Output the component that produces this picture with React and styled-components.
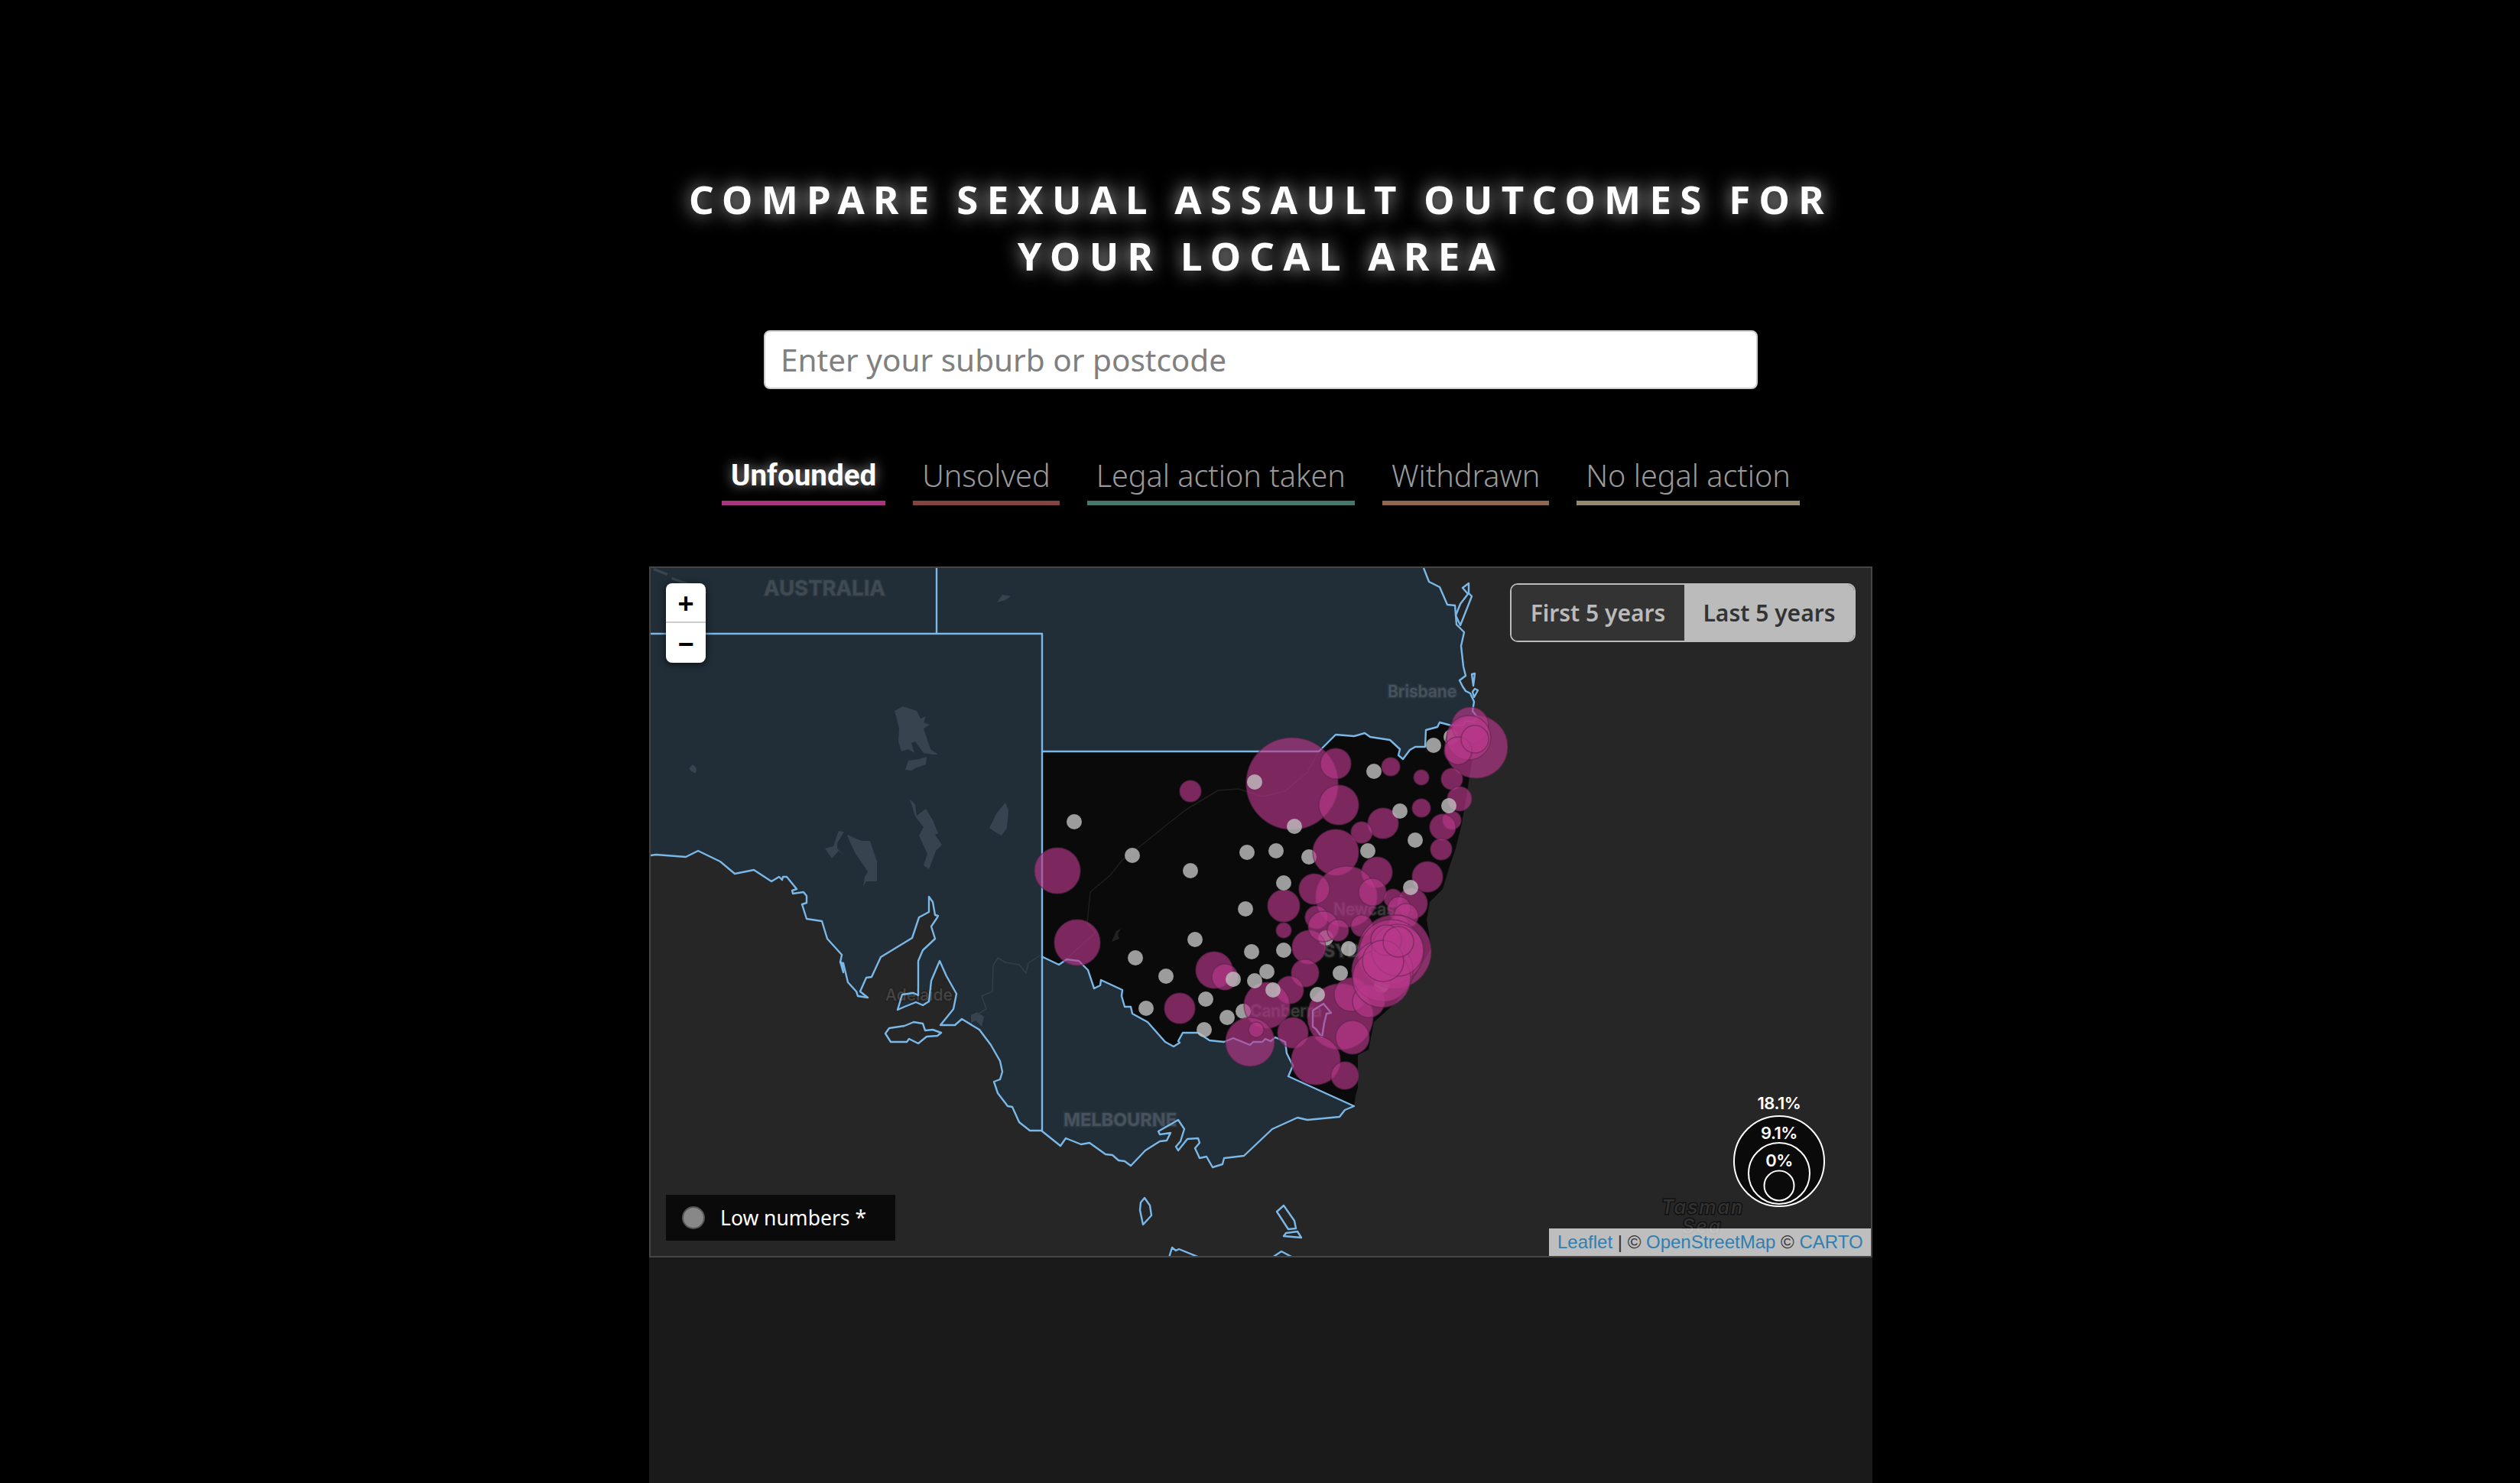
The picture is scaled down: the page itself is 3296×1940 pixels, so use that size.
import React from 'react';
import styled, { createGlobalStyle } from 'styled-components';

const GlobalStyle = createGlobalStyle`
  html, body { margin: 0; padding: 0; background: #000; }
  body { font-family: "Noto Sans", "Open Sans", sans-serif; overflow: hidden; }
`;

const Page = styled.div`
  width: 3296px;
  height: 1940px;
  padding-top: 223px;
  padding-left: 2px;
  box-sizing: border-box;
  display: flex;
  flex-direction: column;
  align-items: center;
  overflow: hidden;
`;

const Title = styled.h1`
  margin: 0;
  width: 1600px;
  font-size: 51px;
  line-height: 74px;
  font-weight: 700;
  letter-spacing: 11.3px;
  text-align: center;
  text-transform: uppercase;
  color: #fff;
  text-shadow: 0 0 24px rgba(255, 255, 255, 0.8);
`;

const Search = styled.input`
  display: block;
  box-sizing: border-box;
  width: 1300px;
  height: 77px;
  margin-top: 61px;
  padding: 0 20px;
  border: 2px solid #ccc;
  border-radius: 8px;
  background: #fff;
  font-family: inherit;
  font-size: 40.5px;
  color: #222;
  &::placeholder { color: #808080; opacity: 1; }
`;

const Tabs = styled.div`
  display: flex;
  gap: 36px;
  margin-top: 86px;
  margin-bottom: 80px;
`;

const Tab = styled.div`
  padding: 0 12px 6px;
  border-bottom: 6px solid ${(p) => p.$color};
  font-family: ${(p) => (p.$active ? 'Roboto, sans-serif' : 'inherit')};
  font-size: ${(p) => (p.$active ? 38.6 : 39.6)}px;
  line-height: 54px;
  font-weight: ${(p) => (p.$active ? 700 : 300)};
  color: ${(p) => (p.$active ? '#fff' : '#9a9a9a')};
  text-shadow: ${(p) => (p.$active ? '0 0 16px rgba(255,255,255,.6)' : 'none')};
`;

const MapFrame = styled.div`
  position: relative;
  flex: none;
  box-sizing: border-box;
  width: 1600px;
  height: 904px;
  border: 2px solid #444;
  background: #262626;
  overflow: hidden;
`;

const MapSvg = styled.svg`
  display: block;
  width: 1596px;
  height: 900px;
`;

const ZoomControl = styled.div`
  position: absolute;
  left: 20px;
  top: 20px;
  width: 52px;
  border-radius: 8px;
  background: #fff;
  box-shadow: 0 2px 10px rgba(0, 0, 0, 0.65);
  overflow: hidden;
`;

const ZoomButton = styled.div`
  height: 52px;
  padding-top: 4px;
  display: flex;
  align-items: center;
  justify-content: center;
  box-sizing: border-box;
  border-bottom: ${(p) => (p.$first ? '2px solid #ccc' : 'none')};
  font-family: "Liberation Sans", sans-serif;
  font-size: 36px;
  font-weight: 700;
  color: #000;
`;

const PeriodToggle = styled.div`
  position: absolute;
  right: 20px;
  top: 20px;
  display: flex;
  box-sizing: border-box;
  height: 77px;
  border: 2px solid #bbb;
  border-radius: 10px;
  overflow: hidden;
`;

const PeriodButton = styled.div`
  display: flex;
  align-items: center;
  justify-content: center;
  width: ${(p) => p.$width}px;
  background: ${(p) => (p.$on ? '#bbb' : '#333')};
  color: ${(p) => (p.$on ? '#333' : '#bbb')};
  font-size: 30px;
  font-weight: 600;
`;

const LowKey = styled.div`
  position: absolute;
  left: 20px;
  bottom: 20px;
  display: flex;
  align-items: center;
  gap: 20px;
  box-sizing: border-box;
  width: 300px;
  height: 60px;
  padding-left: 21px;
  background: #0a0a0a;
  color: #fff;
  font-size: 26.5px;
`;

const LowDot = styled.span`
  flex: none;
  box-sizing: border-box;
  width: 30px;
  height: 30px;
  border-radius: 50%;
  border: 2px solid #555;
  background: #888;
`;

const Attribution = styled.div`
  position: absolute;
  right: 0;
  bottom: 0;
  box-sizing: border-box;
  width: 421px;
  height: 36px;
  padding-left: 11px;
  background: rgba(255, 255, 255, 0.7);
  font-family: "Liberation Sans", Arial, sans-serif;
  font-size: 24px;
  line-height: 36px;
  color: #333;
  white-space: nowrap;
`;

const AttrLink = styled.span`
  color: #2f7fb2;
`;

const LowerPanel = styled.div`
  flex: 1;
  width: 1600px;
  background: #1a1a1a;
`;

const Land = styled.path`
  fill: ${(p) => p.$fill};
  stroke: none;
`;

const Line = styled.path`
  fill: ${(p) => p.$fill || 'none'};
  stroke: ${(p) => p.$stroke || '#7ab8e8'};
  stroke-width: ${(p) => p.$width || 2.4}px;
  stroke-linejoin: round;
`;

const Bubble = styled.circle`
  fill: #b8388a;
  fill-opacity: 0.66;
  stroke: #5a2548;
  stroke-opacity: 0.55;
  stroke-width: 1.5px;
`;

const GreyBubble = styled.circle`
  fill: #c0c0c0;
  fill-opacity: 0.8;
`;

const KeyRing = styled.circle`
  fill: #0a0a0a;
  stroke: #fff;
  stroke-width: 2px;
`;

const MapLabel = styled.text`
  font-family: Inter, "Noto Sans", sans-serif;
  font-size: ${(p) => p.$size}px;
  font-weight: ${(p) => p.$weight || 600};
  font-style: ${(p) => (p.$italic ? 'italic' : 'normal')};
  letter-spacing: ${(p) => (p.$italic ? 2 : 0)}px;
  fill: ${(p) => p.$fill};
  stroke: ${(p) => p.$halo};
  stroke-width: 3px;
  paint-order: stroke;
`;

const KeyLabel = styled.text`
  font-family: Inter, "Noto Sans", sans-serif;
  font-size: 22px;
  font-weight: 600;
  letter-spacing: -0.5px;
  fill: #fff;
  text-anchor: middle;
`;

const d = (...parts) => 'M' + parts.join(' ').trim().split(/\s+/).join(' L');

const qldCoast = '1862,743 1869,761 1883,768 1893,791 1903,792 1905,817 1915,827 1911,845 1914,872 1917,884 1909,890 1913,898 1917,904 1923,907 1928,918 1926,930 1933,939';
const qldBorder = '1925,945 1917,943 1914,949 1898,949 1883,945 1880,951 1865,955 1864,977 1851,977 1844,981 1835,993 1829,988 1831,980 1818,968 1792,964 1785,959 1771,963 1747,961 1725,983 1363,983';
const vicNorth = '1362,1251 1385,1262 1395,1255 1411,1257 1423,1269 1431,1293 1439,1289 1440,1282 1468,1295 1467,1303 1471,1317 1479,1317 1481,1326 1501,1337 1524,1363 1535,1369 1543,1364 1541,1362 1547,1351 1567,1351 1582,1361 1601,1363 1613,1358 1635,1367 1639,1363 1651,1363 1655,1359 1662,1362 1668,1357 1681,1363 1683,1378 1691,1394 1685,1408 1771,1447';
const nswCoast = '1773,1433 1776,1423 1776,1380 1790,1373 1797,1337 1824,1313 1845,1287 1872,1240 1866,1203 1870,1180 1887,1163 1896,1133 1904,1110 1912,1077 1921,1023 1925,997 1928,960';
const vicCoast = '1759,1452 1752,1461 1710,1465 1697,1462 1664,1477 1627,1512 1601,1515 1599,1523 1586,1527 1578,1513 1569,1515 1563,1502 1569,1495 1567,1489 1553,1490 1541,1505 1538,1500 1544,1493 1549,1477 1541,1465 1515,1480 1517,1484 1531,1482 1526,1492 1517,1493 1498,1505 1479,1525 1471,1519 1463,1518 1455,1511 1446,1510 1425,1495 1414,1497 1394,1489 1387,1499 1362,1479';
const saCoast = '1347,1479 1333,1468 1324,1448 1318,1447 1305,1430 1300,1415 1308,1412 1311,1402 1308,1388 1296,1367 1281,1347 1258,1333 1249,1341 1230,1341 1247,1320 1251,1300 1238,1277 1229,1257 1218,1283 1215,1310 1207,1315 1198,1311 1183,1317 1174,1321 1180,1301 1195,1299 1201,1302 1201,1257 1207,1243 1223,1228 1218,1212 1226,1200 1227,1198 1223,1197 1220,1180 1215,1173 1215,1193 1202,1200 1193,1227 1152,1252 1140,1278 1133,1279 1125,1297 1135,1305 1122,1303 1120,1297 1109,1285 1103,1260 1099,1259 1101,1249 1082,1228 1075,1205 1055,1202 1049,1183 1055,1181 1055,1172 1051,1167 1037,1169 1036,1165 1042,1163 1029,1147 1024,1147 1023,1151 1019,1147 1009,1153 986,1138 961,1143 942,1127 913,1113 897,1121 858,1118 851,1119';

const landPath = d('851,743', qldCoast, qldBorder, vicNorth, vicCoast, saCoast) + ' Z';
const nswPath = d(qldBorder, vicNorth, nswCoast) + ' Z';
const coastLine = d(qldCoast, qldBorder);
const southLine = d(vicNorth, vicCoast, saCoast);

const islands = [
  '1158,1352 1163,1345 1183,1342 1195,1337 1207,1339 1210,1348 1220,1347 1231,1351 1226,1355 1212,1356 1201,1365 1189,1359 1186,1363 1165,1363',
  '1497,1567 1504,1577 1506,1590 1495,1602 1491,1583 1492,1573',
  '1679,1577 1670,1585 1685,1608 1695,1607 1693,1597',
  '1682,1613 1697,1611 1702,1619 1679,1617',
  '1529,1645 1533,1632 1538,1636 1542,1634 1569,1645',
  '1664,1645 1676,1637 1691,1645',
  '1921,763 1913,769 1920,777 1910,790 1904,805 1910,818 1925,780 1921,776',
  '1925,882 1929,881 1927,897',
  '1929,901 1933,903 1928,912 1926,905',
  '1102,1262 1099,1258 1103,1272',
  '1717,1322 1731,1313 1741,1325 1735,1326 1732,1338 1729,1357 1721,1346 1717,1343',
];

const lakes = [
  '1170,930 1181,924 1199,930 1204,940 1211,937 1208,945 1216,948 1208,953 1217,980 1227,987 1219,987 1208,985 1197,970 1192,972 1196,985 1188,980 1179,983 1175,970 1176,953 1172,937',
  '1212,990 1211,1000 1197,1005 1192,1008 1184,1007 1188,995 1202,993',
  '901,1005 906,1000 911,1005 910,1012 904,1009',
  '1189,1045 1197,1052 1199,1067 1211,1058 1220,1073 1227,1090 1223,1092 1232,1105 1224,1113 1215,1137 1208,1132 1213,1117 1202,1093 1208,1082 1197,1068 1192,1052',
  '1315,1050 1319,1060 1317,1083 1310,1093 1304,1090 1294,1083 1304,1063',
  '1108,1092 1127,1100 1138,1100 1147,1127 1147,1153 1133,1153 1129,1160 1131,1147 1135,1140 1119,1117 1111,1100',
  '1097,1087 1104,1088 1095,1103 1095,1110 1106,1120 1097,1113 1088,1123 1079,1110 1090,1107 1094,1095',
  '856,743 874,750 872,753 854,746',
  '879,755 902,763 925,775 922,777 900,766 878,758',
  '1304,788 1311,778 1322,780 1315,785',
  '1270,1328 1278,1324 1287,1330 1284,1343 1276,1335 1270,1338',
];

const rivers = [
  '1395,1255 1407,1243 1433,1220 1422,1207 1426,1167 1452,1145 1468,1125 1500,1100 1521,1083 1550,1060 1593,1034 1620,1032 1651,1042 1681,1035 1710,1010 1725,983',
];

const saRiver = '1360,1250 1345,1260 1342,1273 1333,1262 1315,1259 1305,1253 1299,1263 1298,1297 1284,1303 1290,1320 1278,1327';

const bubbles = [
  [1690, 1025, 60], [1747, 999, 20], [1751, 1053, 26], [1557, 1035, 14], [1383, 1139, 30], [1819, 1003, 12],
  [1859, 1017, 10], [1931, 977, 41], [1923, 949, 24], [1921, 965, 29], [1907, 982, 18], [1929, 967, 18],
  [1899, 1019, 14], [1909, 1045, 16], [1859, 1057, 12], [1899, 1073, 12], [1809, 1077, 20], [1887, 1082, 17],
  [1781, 1089, 14], [1885, 1111, 14], [1747, 1115, 30], [1801, 1141, 20], [1867, 1147, 20], [1761, 1173, 40],
  [1719, 1163, 20], [1795, 1167, 18], [1679, 1185, 21], [1679, 1217, 10], [1409, 1233, 30], [1588, 1269, 24],
  [1602, 1278, 17], [1712, 1239, 22], [1707, 1273, 18], [1687, 1295, 18], [1657, 1315, 30], [1543, 1319, 20],
  [1635, 1363, 32], [1643, 1347, 10], [1691, 1351, 20], [1753, 1330, 43], [1767, 1301, 22], [1790, 1310, 21],
  [1769, 1357, 22], [1721, 1387, 32], [1759, 1407, 18], [1722, 1200, 15], [1731, 1212, 20], [1750, 1217, 14],
  [1781, 1211, 14], [1822, 1175, 12], [1847, 1182, 20], [1830, 1188, 15], [1839, 1198, 16], [1830, 1210, 13],
  [1824, 1245, 48], [1820, 1245, 42], [1808, 1270, 40], [1807, 1280, 38], [1828, 1243, 34], [1813, 1230, 20],
  [1809, 1257, 27], [1829, 1232, 20],
];

// these sit underneath the pink circles in the picture
const greyUnder = [[1898, 964], [1712, 1121], [1734, 1227], [1764, 1241], [1807, 1289], [1626, 1323]];

const greyBubbles = [
  [1405, 1075], [1481, 1119], [1557, 1139], [1631, 1115], [1669, 1113], [1693, 1081], [1641, 1023],
  [1797, 1009], [1831, 1061], [1895, 1054], [1851, 1099], [1789, 1113], [1875, 975], [1679, 1155],
  [1629, 1189], [1845, 1161], [1563, 1229], [1485, 1253], [1525, 1277], [1637, 1245], [1679, 1243], [1657, 1271],
  [1641, 1283], [1613, 1281], [1577, 1307], [1499, 1319], [1605, 1331], [1575, 1347], [1665, 1295],
  [1723, 1301], [1753, 1273],
];

const tabs = [
  { label: 'Unfounded', color: '#a8347f', active: true },
  { label: 'Unsolved', color: '#834340' },
  { label: 'Legal action taken', color: '#47766a' },
  { label: 'Withdrawn', color: '#8f664f' },
  { label: 'No legal action', color: '#948a6d' },
];

const App = () => {
  return (
    <Page>
      <GlobalStyle />
      <Title>Compare sexual assault outcomes for your local area</Title>
      <Search type="text" placeholder="Enter your suburb or postcode" />
      <Tabs>
        {tabs.map((tab) => (
          <Tab key={tab.label} $color={tab.color} $active={tab.active}>{tab.label}</Tab>
        ))}
      </Tabs>
      <MapFrame>
        <MapSvg viewBox="851 743 1596 900">
          <Land $fill="#212d37" d={landPath} />
          <Land $fill="#0a0a0a" d={nswPath} />
          {lakes.map((lake) => (
            <Land key={lake} $fill="#37444f" d={d(lake) + ' Z'} />
          ))}
          <Land $fill="#222" d="M1454 1232 L1460 1218 L1466 1215 L1462 1222 L1464 1228 Z" />
          {rivers.map((river) => (
            <Line key={river} $stroke="#1e1e1e" $width={1.5} d={d(river)} />
          ))}
          <Line $stroke="#323f49" $width={1.5} d={d(saRiver)} />

          <MapLabel x="999" y="779" $size={27.5} $weight={700} $fill="#3f4a53" $halo="#2a343d">AUSTRALIA</MapLabel>
          <MapLabel x="1815" y="912" $size={21} $fill="#47525c" $halo="#2d3943">Brisbane</MapLabel>
          <MapLabel x="1158" y="1309" $size={21} $weight={500} $fill="#454545" $halo="#222">Adelaide</MapLabel>
          <MapLabel x="1391" y="1473" $size={23.5} $weight={700} $fill="#47525c" $halo="#2d3943">MELBOURNE</MapLabel>
          <MapLabel x="1731" y="1252" $size={23} $weight={700} $fill="#3c3c3c" $halo="#1a1a1a">SYDNEY</MapLabel>
          <MapLabel x="1744" y="1197" $size={21} $weight={500} $fill="#3c3c3c" $halo="#1a1a1a">Newcastle</MapLabel>
          <MapLabel x="1635" y="1330" $size={21} $weight={500} $fill="#3c3c3c" $halo="#1a1a1a">Canberra</MapLabel>
          <MapLabel x="2173" y="1588" $size={25} $weight={500} $italic $fill="#333" $halo="#111">Tasman</MapLabel>
          <MapLabel x="2200" y="1613" $size={25} $weight={500} $italic $fill="#333" $halo="#111">Sea</MapLabel>

          <Line d={d('1225,743', '1225,829')} />
          <Line d={d('851,829', '1363,829', '1363,1479')} />
          <Line d={coastLine} />
          <Line d={southLine} />
          {islands.map((island) => (
            <Line key={island} d={d(island) + ' Z'} />
          ))}

          {greyUnder.map(([x, y]) => (
            <GreyBubble key={`${x}-${y}`} cx={x} cy={y} r={10} />
          ))}
          {bubbles.map(([x, y, r]) => (
            <Bubble key={`${x}-${y}-${r}`} cx={x} cy={y} r={r} />
          ))}
          {greyBubbles.map(([x, y]) => (
            <GreyBubble key={`${x}-${y}`} cx={x} cy={y} r={10} />
          ))}

          <KeyRing cx="2327" cy="1519" r="59" />
          <KeyRing cx="2327" cy="1535" r="40" />
          <KeyRing cx="2327" cy="1551" r="19.5" />
          <KeyLabel x="2327" y="1451">18.1%</KeyLabel>
          <KeyLabel x="2327" y="1490">9.1%</KeyLabel>
          <KeyLabel x="2327" y="1526">0%</KeyLabel>
        </MapSvg>

        <ZoomControl>
          <ZoomButton $first>+</ZoomButton>
          <ZoomButton>−</ZoomButton>
        </ZoomControl>
        <PeriodToggle>
          <PeriodButton $width={226}>First 5 years</PeriodButton>
          <PeriodButton $width={222} $on>Last 5 years</PeriodButton>
        </PeriodToggle>
        <LowKey>
          <LowDot />
          Low numbers *
        </LowKey>
        <Attribution>
          <AttrLink>Leaflet</AttrLink> | © <AttrLink>OpenStreetMap</AttrLink> © <AttrLink>CARTO</AttrLink>
        </Attribution>
      </MapFrame>
      <LowerPanel />
    </Page>
  );
};

export default App;
